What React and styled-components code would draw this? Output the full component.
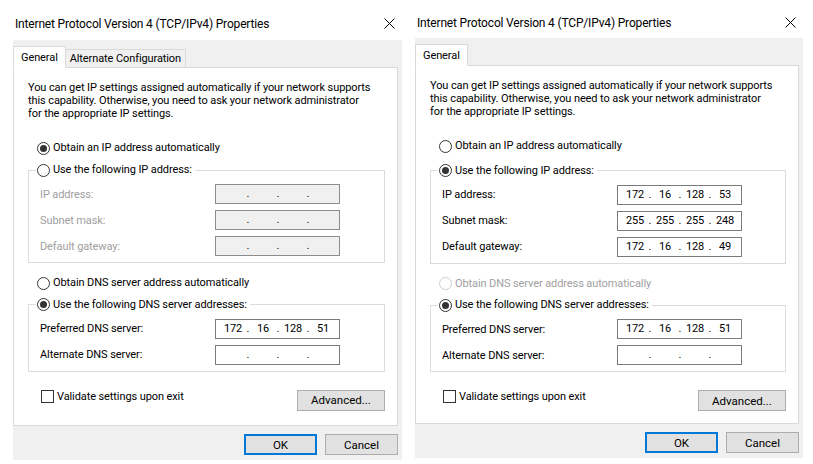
import React from 'react';
import styled, { createGlobalStyle } from 'styled-components';

const GlobalStyle = createGlobalStyle`
  html, body {
    margin: 0;
    padding: 0;
    background: #fff;
  }
  body {
    font-family: Roboto, "Noto Sans", sans-serif;
    font-size: 11px;
    letter-spacing: -0.1px;
    color: #000;
  }
`;

const EMPTY = ['', '', '', ''];

const dialogs = [
  {
    id: 'left',
    titleHeight: 40,
    width: 389,
    tabs: ['General', 'Alternate Configuration'],
    ipAuto: true,
    dnsAutoDisabled: false,
    ip: EMPTY,
    mask: EMPTY,
    gateway: EMPTY,
    dns1: ['172', '16', '128', '51'],
    dns2: EMPTY,
  },
  {
    id: 'right',
    titleHeight: 38,
    width: 388,
    tabs: ['General'],
    ipAuto: false,
    dnsAutoDisabled: true,
    ip: ['172', '16', '128', '53'],
    mask: ['255', '255', '255', '248'],
    gateway: ['172', '16', '128', '49'],
    dns1: ['172', '16', '128', '51'],
    dns2: EMPTY,
  },
];

function CloseIcon() {
  return (
    <svg width="11" height="11" viewBox="0 0 11 11">
      <path d="M0.5 0.5 L10.5 10.5 M10.5 0.5 L0.5 10.5" stroke="#000" strokeWidth="1" />
    </svg>
  );
}

function Radio({ checked, disabled, children }) {
  return (
    <RadioLabel $disabled={disabled}>
      <RadioCircle $disabled={disabled}>{checked && <RadioDot />}</RadioCircle>
      {children}
    </RadioLabel>
  );
}

function IpField({ value, disabled }) {
  return (
    <IpBox $disabled={disabled}>
      {value.map((part, i) => (
        <React.Fragment key={i}>
          <IpPart>{part}</IpPart>
          {i < 3 && <IpDot>.</IpDot>}
        </React.Fragment>
      ))}
    </IpBox>
  );
}

function FieldRow({ label, value, disabled }) {
  return (
    <>
      <FieldLabel $disabled={disabled}>{label}</FieldLabel>
      <IpField value={value} disabled={disabled} />
    </>
  );
}

function Dialog({ d }) {
  const ipDisabled = d.ipAuto;
  return (
    <Window $width={d.width}>
      <TitleBar $height={d.titleHeight}>
        <Title>Internet Protocol Version 4 (TCP/IPv4) Properties</Title>
        <CloseIcon />
      </TitleBar>
      <Body>
        <TabRow>
          {d.tabs.map((t, i) => (
            <Tab key={t} $active={i === 0}>
              {t}
            </Tab>
          ))}
        </TabRow>
        <Panel>
          <Desc>
            You can get IP settings assigned automatically if your network supports
            <br />
            this capability. Otherwise, you need to ask your network administrator
            <br />
            for the appropriate IP settings.
          </Desc>
          <RadioRow $gap={21}>
            <Radio checked={d.ipAuto}>Obtain an IP address automatically</Radio>
          </RadioRow>
          <Group $gap={8}>
            <Legend>
              <Radio checked={!d.ipAuto}>Use the following IP address:</Radio>
            </Legend>
            <GroupBody>
              <FieldRow label="IP address:" value={d.ip} disabled={ipDisabled} />
              <FieldRow label="Subnet mask:" value={d.mask} disabled={ipDisabled} />
              <FieldRow label="Default gateway:" value={d.gateway} disabled={ipDisabled} />
            </GroupBody>
          </Group>
          <RadioRow $gap={13}>
            <Radio checked={false} disabled={d.dnsAutoDisabled}>
              Obtain DNS server address automatically
            </Radio>
          </RadioRow>
          <Group $gap={5}>
            <Legend>
              <Radio checked>Use the following DNS server addresses:</Radio>
            </Legend>
            <GroupBody>
              <FieldRow label="Preferred DNS server:" value={d.dns1} />
              <FieldRow label="Alternate DNS server:" value={d.dns2} />
            </GroupBody>
          </Group>
          <BottomRow>
            <CheckLabel>
              <CheckBox />
              Validate settings upon exit
            </CheckLabel>
            <Button $width={88} $height={21}>
              Advanced...
            </Button>
          </BottomRow>
        </Panel>
        <Footer>
          <Button $primary>OK</Button>
          <Button>Cancel</Button>
        </Footer>
      </Body>
    </Window>
  );
}

export default function App() {
  return (
    <Page>
      <GlobalStyle />
      {dialogs.map(d => (
        <Dialog key={d.id} d={d} />
      ))}
    </Page>
  );
}

const Page = styled.div`
  display: flex;
  align-items: flex-start;
  gap: 13px;
  padding-left: 13px;
  width: 813px;
  height: 464px;
  box-sizing: border-box;
  overflow: hidden;
`;

const Window = styled.div`
  width: ${p => p.$width}px;
  display: flex;
  flex-direction: column;
`;

const TitleBar = styled.div`
  height: ${p => p.$height}px;
  box-sizing: border-box;
  display: flex;
  justify-content: space-between;
  align-items: center;
  padding: 7px 7px 0 2px;
`;

const Title = styled.span`
  font-size: 12px;
  letter-spacing: -0.17px;
  white-space: nowrap;
`;

const Body = styled.div`
  height: 420px;
  box-sizing: border-box;
  background: #f0f0f0;
  padding: 6px 4px 0 0;
  display: flex;
  flex-direction: column;
`;

const TabRow = styled.div`
  display: flex;
  align-items: flex-end;
  height: 22px;
  margin-bottom: -1px;
  position: relative;
  z-index: 1;
`;

const Tab = styled.div`
  box-sizing: border-box;
  border: 1px solid #d9d9d9;
  white-space: nowrap;
  display: flex;
  align-items: center;
  ${p =>
    p.$active
      ? `
    height: 22px;
    padding: 0 7px;
    background: #fff;
    border-bottom-color: #fff;
  `
      : `
    height: 18px;
    margin-bottom: 1px;
    padding: 0 4px;
    border-left: none;
    border-bottom: none;
    background: #f0f0f0;
  `}
`;

const Panel = styled.div`
  height: 359px;
  box-sizing: border-box;
  background: #fff;
  border: 1px solid #d9d9d9;
  padding: 13px 12px 0 14px;
  display: flex;
  flex-direction: column;
`;

const Desc = styled.p`
  margin: 0;
  line-height: 13px;
  white-space: nowrap;
`;

const RadioRow = styled.div`
  margin-top: ${p => p.$gap}px;
  padding-left: 9px;
`;

const RadioLabel = styled.span`
  display: inline-flex;
  align-items: center;
  gap: 3px;
  height: 14px;
  line-height: 14px;
  white-space: nowrap;
  color: ${p => (p.$disabled ? '#a0a0a0' : '#000')};
`;

const RadioCircle = styled.span`
  width: 13px;
  height: 13px;
  box-sizing: border-box;
  border-radius: 50%;
  border: 1px solid ${p => (p.$disabled ? '#cccccc' : '#333')};
  background: #fff;
  display: flex;
  align-items: center;
  justify-content: center;
`;

const RadioDot = styled.span`
  width: 7px;
  height: 7px;
  border-radius: 50%;
  background: #333;
`;

const Group = styled.fieldset`
  margin: ${p => p.$gap}px 0 0;
  padding: 7px 0 6px;
  border: 1px solid #dcdcdc;
  min-width: 0;
`;

const Legend = styled.legend`
  margin-left: 7px;
  padding: 0 3px 0 1px;
  height: 14px;
`;

const GroupBody = styled.div`
  display: grid;
  grid-template-columns: 175px 125px;
  row-gap: 6px;
  align-items: center;
  padding-left: 11px;
`;

const FieldLabel = styled.span`
  white-space: nowrap;
  color: ${p => (p.$disabled ? '#a0a0a0' : '#000')};
`;

const IpBox = styled.div`
  width: 125px;
  height: 20px;
  box-sizing: border-box;
  border: 1px solid ${p => (p.$disabled ? '#8c8c8c' : '#7a7a7a')};
  background: ${p => (p.$disabled ? '#f0f0f0' : '#fff')};
  padding-left: 6px;
  display: grid;
  grid-template-columns: 22px 8px 22px 8px 22px 8px 22px;
  align-items: center;
  text-align: center;
  line-height: 18px;
`;

const IpPart = styled.span``;

const IpDot = styled.span``;

const BottomRow = styled.div`
  margin-top: 18px;
  display: flex;
  justify-content: space-between;
  align-items: flex-start;
`;

const CheckLabel = styled.span`
  display: inline-flex;
  align-items: center;
  gap: 3px;
  margin: 0 0 0 13px;
  height: 13px;
  white-space: nowrap;
`;

const CheckBox = styled.span`
  width: 13px;
  height: 13px;
  box-sizing: border-box;
  border: 1px solid #333;
  background: #fff;
`;

const Button = styled.button`
  width: ${p => p.$width || 73}px;
  height: ${p => p.$height || 21}px;
  box-sizing: border-box;
  margin: 0;
  padding: 0;
  font: inherit;
  font-size: 11.5px;
  color: #000;
  background: #e1e1e1;
  border: ${p => (p.$primary ? '2px solid #0078d7' : '1px solid #adadad')};
`;

const Footer = styled.div`
  margin-top: 8px;
  display: flex;
  justify-content: flex-end;
  gap: 8px;
`;
